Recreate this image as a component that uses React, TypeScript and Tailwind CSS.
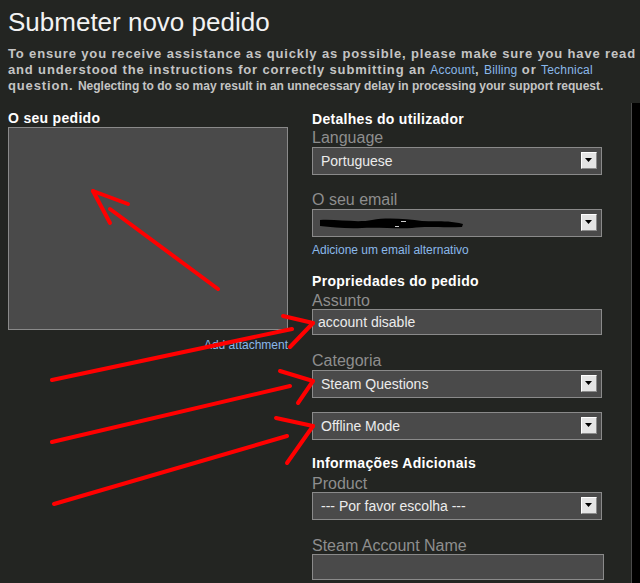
import React from 'react';

const arrows: [number, number, number, number][] = [
  // arrow pointing into the text area
  [218, 289, 110, 209],
  [93, 191, 128, 204],
  [93, 191, 110, 223],
  // arrow to Assunto
  [52, 380, 292, 329],
  [283, 316, 313, 323],
  [313, 323, 290, 347],
  // arrow to Categoria
  [52, 442, 290, 386],
  [280, 371, 313, 381],
  [313, 381, 298, 403],
  // arrow to sub category
  [54, 504, 287, 436],
  [276, 418, 313, 426],
  [313, 426, 287, 463],
];

function DropButton() {
  return (
    <span className="absolute right-[4px] top-[4px] flex h-[17px] w-[16px] items-center justify-center border border-t-white border-l-white border-r-[#8a8a8a] border-b-[#8a8a8a] bg-[#e4e4e4]">
      <svg width="8" height="5" viewBox="0 0 8 5">
        <path d="M0 0 H7 L3.5 4 Z" fill="#000" />
      </svg>
    </span>
  );
}

function Select({ value, children }: { value?: string; children?: React.ReactNode }) {
  return (
    <div className="relative h-[28px] w-[290px] border border-[#8a8a8a] bg-[#4a4a4a]">
      {value && (
        <span className="absolute left-[8px] top-[5px] text-[14px] leading-[16px] text-[#ececec]">{value}</span>
      )}
      {children}
      <DropButton />
    </div>
  );
}

function Label({ children, className = '' }: { children: React.ReactNode; className?: string }) {
  return <div className={`text-[16px] leading-[19px] text-[#8e8e8e] ${className}`}>{children}</div>;
}

function Heading({ children, className = '' }: { children: React.ReactNode; className?: string }) {
  return (
    <div className={`text-[14px] font-bold leading-[17px] tracking-[0.3px] text-white ${className}`}>{children}</div>
  );
}

export default function App() {
  return (
    <div className="relative h-[583px] w-[640px] overflow-hidden bg-[#232522] font-['Liberation_Sans',Arial,sans-serif]">
      <h1 className="px-[8px] pt-[7px] text-[26px] font-normal leading-[30px] text-[#f2f2f2]">Submeter novo pedido</h1>

      <p className="mt-[9px] whitespace-nowrap px-[8px] text-[13px] font-bold leading-[16px] tracking-[0.85px] text-[#c4c4c4]">
        To ensure you receive assistance as quickly as possible, please make sure you have read
        <br />
        and understood the instructions for correctly submitting an{' '}
        <span className="font-normal text-[12px] tracking-[0.2px] text-[#8ab8ea]">Account</span>,{' '}
        <span className="font-normal text-[12px] tracking-[0.2px] text-[#8ab8ea]">Billing</span> or{' '}
        <span className="font-normal text-[12px] tracking-[0.2px] text-[#8ab8ea]">Technical</span>
        <br />
        question.{' '}
        <span className="text-[12px] tracking-[0px]">
          Neglecting to do so may result in an unnecessary delay in processing your support request.
        </span>
      </p>

      <div className="mt-[9px] flex h-[480px]">
        <div className="flex w-[631px]">
          {/* left column */}
          <div className="w-[304px] pl-[8px] pt-[7px]">
            <Heading>O seu pedido</Heading>
            <div className="h-[203px] w-[280px] border border-[#8a8a8a] bg-[#4a4a4a]" />
            <div className="mt-[8px] w-[280px] text-right text-[12px] leading-[14px] text-[#8ab8ea]">Add attachment</div>
          </div>

          {/* right column */}
          <div className="pl-[8px] pt-[8px]">
            <Heading>Detalhes do utilizador</Heading>
            <Label>Language</Label>
            <Select value="Portuguese" />

            <Label className="mt-[15px]">O seu email</Label>
            <Select>
              <svg className="absolute left-[4px] top-[4px]" width="150" height="18" viewBox="0 0 150 18">
                <path
                  d="M3 6 C20 5 40 9 55 6 C70 3 90 5 105 7 C118 8 130 6 146 10 L145 13 C125 14 110 12 95 14 C80 15 60 13 45 14 C30 15 15 13 3 12 Z"
                  fill="#000"
                />
                <rect x="84" y="7" width="5" height="1" fill="#ccc" />
                <rect x="78" y="12" width="4" height="1" fill="#ccc" />
              </svg>
            </Select>
            <div className="mt-[6px] text-[12px] leading-[14px] text-[#8ab8ea]">Adicione um email alternativo</div>

            <Heading className="mt-[16px]">Propriedades do pedido</Heading>
            <Label className="mt-[1px]">Assunto</Label>
            <div className="-mt-[1px] h-[26px] w-[290px] border border-[#8a8a8a] bg-[#4a4a4a] pl-[5px] text-[14px] leading-[24px] text-[#ececec]">
              account disable
            </div>

            <Label className="mt-[16px]">Categoria</Label>
            <Select value="Steam Questions" />

            <div className="mt-[14px]">
              <Select value="Offline Mode" />
            </div>

            <Heading className="mt-[15px]">Informações Adicionais</Heading>
            <Label className="mt-[2px]">Product</Label>
            <div className="-mt-[1px]">
              <Select value="--- Por favor escolha ---" />
            </div>

            <Label className="mt-[16px]">Steam Account Name</Label>
            <div className="-mt-[1px] h-[26px] w-[292px] border border-[#8a8a8a] bg-[#4a4a4a]" />
          </div>
        </div>
        <div className="w-[9px] border-l border-[#4a4a4a] bg-black" />
      </div>

      <svg className="pointer-events-none absolute left-0 top-0" width="640" height="583" viewBox="0 0 640 583">
        {arrows.map(([x1, y1, x2, y2], i) => (
          <line key={i} x1={x1} y1={y1} x2={x2} y2={y2} stroke="#ff0000" strokeWidth="4" strokeLinecap="round" />
        ))}
      </svg>
    </div>
  );
}
